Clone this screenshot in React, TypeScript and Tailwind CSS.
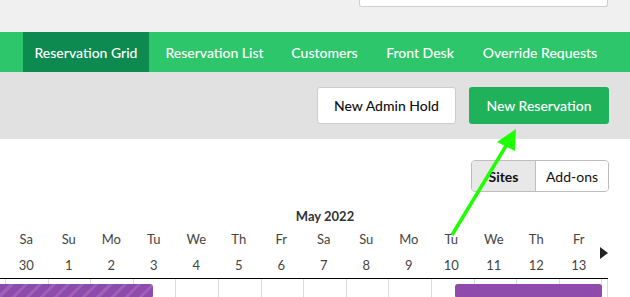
import React from "react";

const tabs = [
  { label: "Reservation Grid", w: "w-[126px]", active: true },
  { label: "Reservation List", w: "w-[131px]", active: false },
  { label: "Customers", w: "w-[89px]", active: false },
  { label: "Front Desk", w: "w-[102px]", active: false },
  { label: "Override Requests", w: "w-[138px]", active: false },
];

const days = [
  { d: "Sa", n: "30" },
  { d: "Su", n: "1" },
  { d: "Mo", n: "2" },
  { d: "Tu", n: "3" },
  { d: "We", n: "4" },
  { d: "Th", n: "5" },
  { d: "Fr", n: "6" },
  { d: "Sa", n: "7" },
  { d: "Su", n: "8" },
  { d: "Mo", n: "9" },
  { d: "Tu", n: "10" },
  { d: "We", n: "11" },
  { d: "Th", n: "12" },
  { d: "Fr", n: "13" },
];

export default function App() {
  return (
    <div className="relative w-[630px] h-[297px] overflow-hidden bg-white font-['Lato',sans-serif]">
      {/* top strip with search box */}
      <div className="h-[32px] bg-[#f0f0f0] flex justify-end pr-[22px]">
        <div className="w-[249px] h-[7px] bg-white border border-t-0 border-[#cfcfcf] rounded-b-[3px]" />
      </div>

      {/* nav */}
      <nav className="h-[40px] bg-[#2ec66b] flex pl-[23px]">
        {tabs.map((t) => (
          <div
            key={t.label}
            className={`${t.w} h-full flex items-center justify-center text-white text-[14px] font-medium ${
              t.active ? "bg-[#0c8a4f]" : ""
            }`}
          >
            {t.label}
          </div>
        ))}
      </nav>

      {/* action band */}
      <div className="h-[67px] bg-[#e1e1e1] flex justify-end items-start pt-[15px] pr-[21px] gap-[13px]">
        <button className="w-[139px] h-[37px] bg-white border border-[#cccccc] rounded-[3px] text-[14px] text-[#111] font-medium">
          New Admin Hold
        </button>
        <button className="w-[140px] h-[37px] bg-[#1fb25b] rounded-[3px] text-[14px] text-white font-medium">
          New Reservation
        </button>
      </div>

      {/* toggle */}
      <div className="flex justify-end pr-[21px] mt-[21px]">
        <div className="flex h-[32px] border border-[#bdbdbd] rounded-[4px] overflow-hidden text-[14px] text-[#111]">
          <div className="w-[64px] flex items-center justify-center bg-[#e8e8e8] font-bold border-r border-[#bdbdbd]">
            Sites
          </div>
          <div className="w-[72px] flex items-center justify-center bg-white">Add-ons</div>
        </div>
      </div>

      {/* month */}
      <div className="mt-[15px] h-[20px] w-[608px] pl-[42px] flex items-center justify-center text-[13px] font-bold text-[#333]">
        May 2022
      </div>

      {/* header days */}
      <div className="w-[608px] pl-[5px] border-b border-black flex text-[13px] text-[#444]">
        {days.map((x, i) => (
          <div key={i} className="w-[42.6px] flex flex-col items-center">
            <div className="h-[26px] flex items-center">{x.d}</div>
            <div className="h-[25px] flex items-center">{x.n}</div>
          </div>
        ))}
        <div className="flex-1 flex items-center justify-end">
          <svg width="8" height="12" viewBox="0 0 8 12">
            <polygon points="0,0 8,6 0,12" fill="#222" />
          </svg>
        </div>
      </div>

      {/* first grid row */}
      <div className="relative w-[608px] h-[20px] pl-[5px] flex">
        {days.map((_, i) => (
          <div key={i} className="w-[42.6px] h-full border-l border-[#dcdcdc]" />
        ))}
        <div className="flex-1 h-full border-l border-r border-[#dcdcdc]" />
        <div className="absolute left-0 top-[5px] w-[153px] h-[14px] rounded-r-[3px] bg-[repeating-linear-gradient(135deg,#8e4bab_0px,#8e4bab_7px,#9d62b8_7px,#9d62b8_10px)]" />
        <div className="absolute left-[455px] top-[5px] w-[147px] h-[14px] rounded-[3px] bg-[#8e4bab]" />
      </div>

      {/* annotation arrow */}
      <svg className="absolute left-0 top-0 pointer-events-none" width="630" height="297">
        <line x1="452" y1="235" x2="509" y2="141" stroke="#1eff00" strokeWidth="3.5" />
        <polygon points="516,129 497,142 515,151" fill="#1eff00" />
      </svg>
    </div>
  );
}
